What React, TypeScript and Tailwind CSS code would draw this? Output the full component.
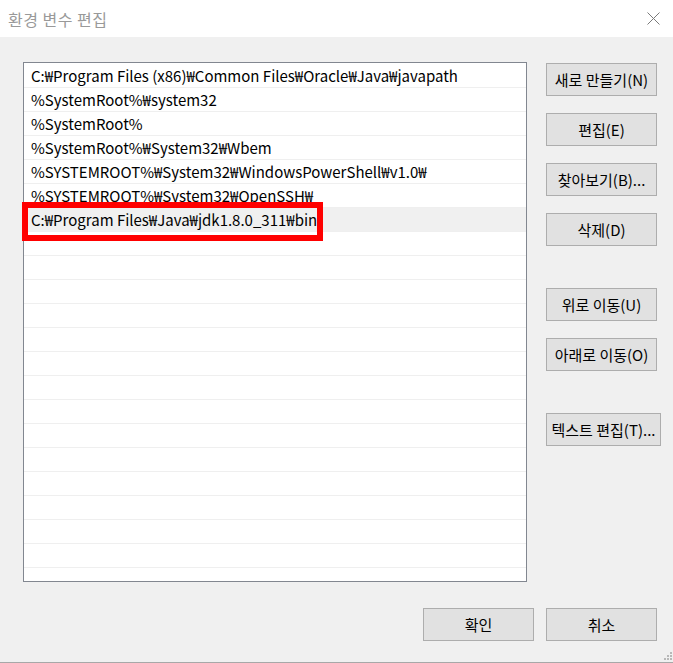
import React from "react";

const paths = [
  "C:₩Program Files (x86)₩Common Files₩Oracle₩Java₩javapath",
  "%SystemRoot%₩system32",
  "%SystemRoot%",
  "%SystemRoot%₩System32₩Wbem",
  "%SYSTEMROOT%₩System32₩WindowsPowerShell₩v1.0₩",
  "%SYSTEMROOT%₩System32₩OpenSSH₩",
  "C:₩Program Files₩Java₩jdk1.8.0_311₩bin",
];

const SELECTED = 6;
const ROW_COUNT = 22;

function Btn({ label, w = "w-[111px]" }: { label: string; w?: string }) {
  return (
    <button
      className={`${w} h-[33px] bg-[#e1e1e1] border border-[#adadad] text-black text-[15px] leading-none flex items-center justify-center whitespace-nowrap`}
    >
      {label}
    </button>
  );
}

export default function App() {
  const rows = Array.from({ length: ROW_COUNT }, (_, i) => paths[i] ?? "");

  return (
    <div
      className="w-[673px] h-[663px] flex flex-col overflow-hidden bg-[#f0f0f0]"
      style={{ fontFamily: '"Noto Sans CJK KR", "Liberation Sans", sans-serif' }}
    >
      {/* 타이틀 바 */}
      <div className="h-[37px] bg-white flex items-center justify-between pl-[8px] pr-[13px] shrink-0">
        <span className="text-[16px] text-[#999999] tracking-[0.5px]">환경 변수 편집</span>
        <svg width="13" height="13" viewBox="0 0 13 13" className="mt-[-1px]">
          <path d="M0.5 0.5 L12.5 12.5 M12.5 0.5 L0.5 12.5" stroke="#7a7a7a" strokeWidth="1" fill="none" />
        </svg>
      </div>

      {/* 본문 */}
      <div className="flex-1 relative border-b border-[#a8a8a8] px-[23px] pt-[25px] flex flex-col">
        <div className="flex gap-[19px]">
          {/* 경로 목록 */}
          <div className="relative">
            <div className="w-[504px] h-[520px] bg-white border border-[#828790] pt-[1px] overflow-hidden">
              {rows.map((p, i) => (
                <div
                  key={i}
                  className={`h-[24px] border-b border-[#efefef] pl-[7px] flex items-center text-[15px] leading-none text-black whitespace-nowrap ${
                    i === SELECTED ? "bg-[#f0f0f0]" : ""
                  }`}
                >
                  {p}
                </div>
              ))}
            </div>
            {/* 강조 박스 */}
            <div className="absolute left-[-1px] top-[140px] w-[301px] h-[39px] border-[6px] border-[#ff0000] pointer-events-none" />
          </div>

          {/* 오른쪽 버튼 */}
          <div className="flex flex-col pt-[1px]">
            <Btn label="새로 만들기(N)" />
            <div className="mt-[17px]"><Btn label="편집(E)" /></div>
            <div className="mt-[17px]"><Btn label="찾아보기(B)..." /></div>
            <div className="mt-[17px]"><Btn label="삭제(D)" /></div>
            <div className="mt-[42px]"><Btn label="위로 이동(U)" /></div>
            <div className="mt-[17px]"><Btn label="아래로 이동(O)" /></div>
            <div className="mt-[42px]"><Btn label="텍스트 편집(T)..." w="w-[115px]" /></div>
          </div>
        </div>

        {/* 하단 버튼 */}
        <div className="flex justify-end gap-[12px] mt-[26px] mr-[-7px]">
          <Btn label="확인" />
          <Btn label="취소" />
        </div>

        {/* 크기 조절 그립 */}
        <svg width="10" height="10" viewBox="0 0 10 10" className="absolute right-0 bottom-[1px]">
          <rect x="7" y="1" width="2" height="2" fill="#b8b8b8" />
          <rect x="4" y="4" width="2" height="2" fill="#b8b8b8" />
          <rect x="7" y="4" width="2" height="2" fill="#b8b8b8" />
          <rect x="1" y="7" width="2" height="2" fill="#b8b8b8" />
          <rect x="4" y="7" width="2" height="2" fill="#b8b8b8" />
          <rect x="7" y="7" width="2" height="2" fill="#b8b8b8" />
        </svg>
      </div>
    </div>
  );
}
